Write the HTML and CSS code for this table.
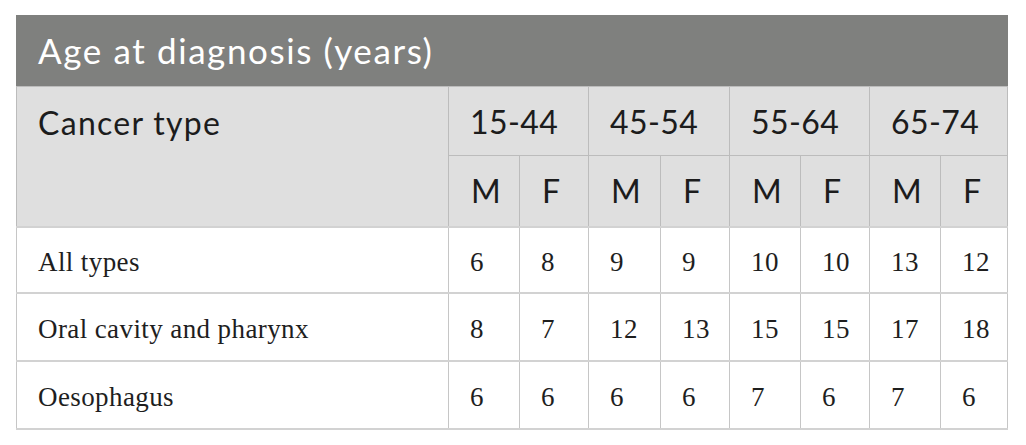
FILE: index.html
```html
<!DOCTYPE html>
<html lang="en">
<head>
<meta charset="utf-8">
<title>Age at diagnosis</title>
<link rel="stylesheet" href="styles.css">
</head>
<body>
<table class="data">
  <colgroup>
    <col class="c-type">
    <col class="c1"><col class="c2"><col class="c3"><col class="c4">
    <col class="c5"><col class="c6"><col class="c7"><col class="c8">
  </colgroup>
  <thead>
    <tr class="title-row">
      <th colspan="9" class="title">Age at diagnosis (years)</th>
    </tr>
    <tr class="group-row">
      <th rowspan="2" class="type-head">Cancer type</th>
      <th colspan="2">15-44</th>
      <th colspan="2">45-54</th>
      <th colspan="2">55-64</th>
      <th colspan="2">65-74</th>
    </tr>
    <tr class="sex-row">
      <th>M</th><th>F</th><th>M</th><th>F</th><th>M</th><th>F</th><th>M</th><th>F</th>
    </tr>
  </thead>
  <tbody>
    <tr class="r1">
      <td class="name">All types</td>
      <td>6</td><td>8</td><td>9</td><td>9</td><td>10</td><td>10</td><td>13</td><td>12</td>
    </tr>
    <tr class="r2">
      <td class="name">Oral cavity and pharynx</td>
      <td>8</td><td>7</td><td>12</td><td>13</td><td>15</td><td>15</td><td>17</td><td>18</td>
    </tr>
    <tr class="r3">
      <td class="name">Oesophagus</td>
      <td>6</td><td>6</td><td>6</td><td>6</td><td>7</td><td>6</td><td>7</td><td>6</td>
    </tr>
  </tbody>
</table>
</body>
</html>
```
FILE: styles.css
```css
html, body {
  margin: 0;
  padding: 0;
  background: #ffffff;
}
body {
  padding: 15px 19px 0 16px;
}
.data {
  border-collapse: collapse;
  table-layout: fixed;
  width: 991px;
  color: #1e1e1e;
}
.c-type { width: 432px; }
.c1 { width: 71px; }
.c2 { width: 69px; }
.c3 { width: 72px; }
.c4 { width: 69px; }
.c5 { width: 71px; }
.c6 { width: 69px; }
.c7 { width: 71px; }
.c8 { width: 67px; }

.data th, .data td {
  border: 1px solid #c4c4c4;
  padding: 0 0 0 21px;
  text-align: left;
  vertical-align: middle;
}
.data thead th {
  font-family: Lato, "Open Sans", sans-serif;
  font-weight: 400;
  background: #dfdfdf;
  color: #1c1c1c;
  font-size: 32px;
  letter-spacing: 0.4px;
  border-color: #bcbcbc;
}
.data thead .title {
  background: #7f807e;
  color: #ffffff;
  padding-left: 21px;
  padding-top: 0;
  padding-bottom: 3px;
  font-size: 35px;
  letter-spacing: 1.6px;
  height: 67px;
  border-color: #7f807e;
  border-bottom-color: #bcbcbc;
}
.group-row th { height: 68px; }
.sex-row th { height: 68px; padding-bottom: 2px; padding-left: 22px; }
.data thead .type-head {
  vertical-align: top;
  padding-left: 21px;
  padding-top: 16px;
  padding-bottom: 0;
  letter-spacing: 1.3px;
}
.data tbody td {
  font-family: "Liberation Serif", "Times New Roman", serif;
  font-size: 27px;
  letter-spacing: 0.4px;
  height: 60px;
  border-top: 2px solid #d2d2d2;
  border-bottom: 2px solid #d2d2d2;
  border-left-color: #c6c6c6;
  border-right-color: #c6c6c6;
  padding-top: 4px;
}
.data tbody .r2 td, .data tbody .r3 td { height: 62px; }
.data tbody td.name {
  padding-left: 21px;
}
```
